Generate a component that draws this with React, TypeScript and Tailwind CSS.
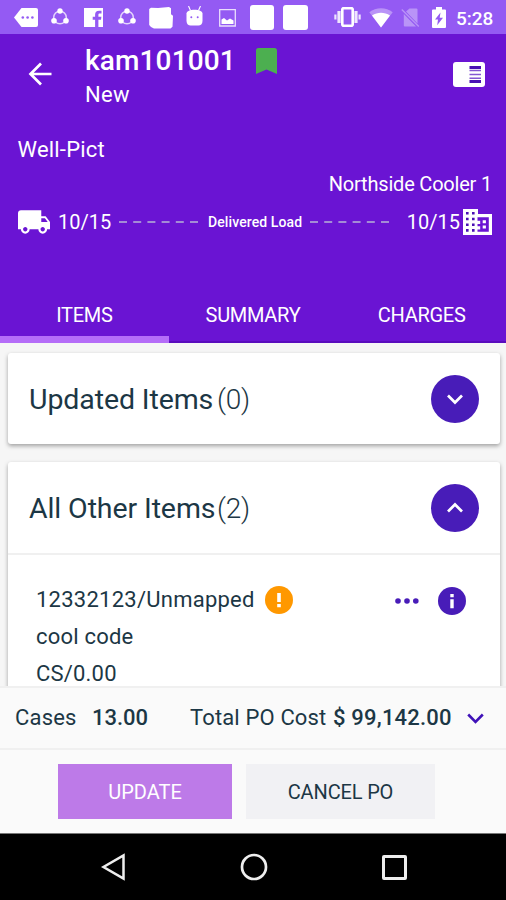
import React, { useState } from 'react';

interface IconProps {
  box: string;
  className: string;
  children: React.ReactNode;
}

const Icon: React.FC<IconProps> = ({ box, className, children }) => (
  <svg viewBox={box} className={`shrink-0 ${className}`} fill="currentColor">
    {children}
  </svg>
);

const ShareIcon = ({ className }: { className: string }) => (
  <Icon box="0 0 18 18" className={className}>
    <circle cx="9" cy="9.5" r="6.3" fill="none" stroke="currentColor" strokeWidth="1.5" opacity="0.75" />
    <circle cx="9" cy="3" r="2.7" />
    <circle cx="3" cy="12.8" r="2.8" />
    <circle cx="15" cy="12.8" r="2.8" />
  </Icon>
);

const StatusBar = () => (
  <div className="flex h-[34px] items-start bg-[#945af3] text-white">
    <Icon box="0 0 24 19" className="ml-[14px] mt-[8px] h-[19px] w-[24px]">
      <path d="M7.500 0H22a2 2 0 0 1 2 2v15a2 2 0 0 1-2 2H7.500L0 9.500z" />
      <g fill="#945af3">
        <circle cx="8.800" cy="9.500" r="1.300" />
        <circle cx="13.600" cy="9.500" r="1.300" />
        <circle cx="18.400" cy="9.500" r="1.300" />
      </g>
    </Icon>
    <ShareIcon className="ml-[13px] mt-[8px] h-[18px] w-[18px]" />
    <Icon box="0 0 19 19" className="ml-[15px] mt-[8px] h-[19px] w-[19px]">
      <path d="M0 0h19v19h-4.600v-7.200h2.600l.4-3h-3V7c0-.9.4-1.400 1.500-1.400h1.600V2.800h-2.400c-2.700 0-4 1.600-4 3.900v2.100H8.700v3h2.400V19H0z" />
    </Icon>
    <ShareIcon className="ml-[15px] mt-[8px] h-[18px] w-[18px]" />
    <Icon box="0 0 24 22" className="ml-[13px] mt-[7px] h-[22px] w-[24px]">
      <path d="M2 .8l7 .2 11-.9 2 1.200v6l2 1.500-.5 11-2 1.700H5l-3-1.500L.2 18V2z" />
    </Icon>
    <Icon box="0 0 17 20" className="ml-[13px] mt-[6px] h-[20px] w-[17px]">
      <path d="M2.500 0l2 4.500M14.500 0l-2 4.500" stroke="currentColor" strokeWidth="1.100" fill="none" />
      <path d="M0.500 7.500C1 5 4 3.800 8.500 3.800S16 5 16.500 7.500V15c0 3-2 4.500-4 4.500h-8c-2 0-4-1.500-4-4.500z" />
      <circle cx="5.300" cy="11.300" r="1" fill="#945af3" />
      <circle cx="11.700" cy="11.300" r="1" fill="#945af3" />
    </Icon>
    <Icon box="0 0 17 18" className="ml-[16px] mt-[9px] h-[18px] w-[17px]">
      <path d="M.7.7h15.600v16.300H.7z" fill="none" stroke="currentColor" strokeWidth="1.300" opacity="0.8" />
      <path d="M2.500 15V10.500l2.500-1.500 3 2.500 3-2 3.500 2V15z" />
    </Icon>
    <div className="ml-[14px] mt-[5px] h-[25px] w-[24px] rounded-[3px] bg-white" />
    <div className="ml-[9px] mt-[5px] h-[25px] w-[25px] rounded-[3px] bg-white" />
    <Icon box="0 0 27 20" className="ml-[26px] mt-[7px] h-[20px] w-[27px]">
      <path d="M9.500 1.200h8a1.200 1.200 0 0 1 1.200 1.200v15.200a1.200 1.200 0 0 1-1.200 1.200h-8a1.200 1.200 0 0 1-1.200-1.200V2.400a1.200 1.200 0 0 1 1.200-1.200z" fill="none" stroke="currentColor" strokeWidth="2.600" />
      <path d="M3.400 4h3.200v12H3.400zM20.400 4h3.200v12h-3.200zM.3 7.500h2.200v5H.3zM24.500 7.500h2.200v5h-2.200z" opacity="0.85" />
    </Icon>
    <Icon box="0 0 24 20" className="ml-[8px] mt-[8px] h-[20px] w-[24px]">
      <path d="M.3 4.200C7-1.200 17-1.200 23.700 4.200L12 19.500z" opacity="0.35" />
      <path d="M3 7.600c5.500-3.700 12.500-3.700 18 0l-9 11.900z" />
    </Icon>
    <Icon box="0 0 19 20" className="ml-[8px] mt-[8px] h-[20px] w-[19px] opacity-35">
      <path d="M5 3.500L8.500.5h7a1 1 0 0 1 1 1V15.500zM2.800 6l12.200 12.500H3.800a1 1 0 0 1-1-1z" />
      <path d="M.8 1.500l17 17" stroke="currentColor" strokeWidth="1.300" />
    </Icon>
    <Icon box="0 0 14 21" className="ml-[12px] mt-[6.500px] h-[21px] w-[14px]">
      <path d="M4 0h6v2.500h3a1 1 0 0 1 1 1V20a1 1 0 0 1-1 1H1a1 1 0 0 1-1-1V3.500a1 1 0 0 1 1-1h3z" />
      <path d="M8.500 5.500L3 12.500h3l-.8 5.800 5.800-7.500H7.700z" fill="#945af3" />
    </Icon>
    <span className="ml-[10px] mt-[7px] text-[19px] font-medium leading-[24px]">5:28</span>
  </div>
);

const Dashes = () => (
  <svg viewBox="0 0 80 2" className="h-[2px] w-[80px] shrink-0 text-[#a48bd6]">
    <path d="M0 1h80" stroke="currentColor" strokeWidth="2" strokeDasharray="8 6.200" />
  </svg>
);

const Header = () => (
  <div className="flex h-[247px] flex-col bg-[#6a14d3] text-white">
    <div className="flex h-[76px]">
      <Icon box="0 0 24 24" className="ml-[28px] mt-[28px] h-[24px] w-[24px]">
        <path d="M23.500 12H3M13 1.500L2.500 12 13 22.500" fill="none" stroke="currentColor" strokeWidth="2.700" />
      </Icon>
      <div className="ml-[33px] flex flex-col">
        <div className="mt-[10px] flex h-[34px] items-center">
          <span className="w-[170.500px] whitespace-nowrap text-[28px] font-medium leading-[34px] tracking-[0.150px]">kam101001</span>
          <Icon box="0 0 21 26" className="h-[26px] w-[21px] text-[#4caf50]">
            <path d="M2.500 0h16A2.500 2.500 0 0 1 21 2.500V26l-10.500-4.500L0 26V2.500A2.500 2.500 0 0 1 2.500 0z" />
          </Icon>
        </div>
        <span className="mt-[4px] text-[22px] leading-[26px] tracking-[0.300px]">New</span>
      </div>
      <Icon box="0 0 32 25" className="ml-auto mr-[21px] mt-[28px] h-[25px] w-[32px]">
        <rect width="32" height="25" rx="3" />
        <path d="M16.500 4H28v3H16.500zM16.500 18H28v3H16.500z" fill="#4a10b4" />
        <path d="M16.500 8.500H28M16.500 12.500H28M16.500 16.300H28" stroke="#8457d2" strokeWidth="1.400" />
      </Icon>
    </div>
    <span className="ml-[17.500px] mt-[27px] text-[22px] leading-[26px] tracking-[0.200px]">Well-Pict</span>
    <span className="mr-[14px] mt-[9px] text-right text-[20px] leading-[24px] tracking-[-0.200px]">Northside Cooler 1</span>
    <div className="mt-[11px] flex h-[30px] items-center">
      <Icon box="1 4 22 16" className="ml-[18px] h-[24px] w-[32px]">
        <path d="M20 8h-3V4H3c-1.100 0-2 .9-2 2v11h2c0 1.660 1.340 3 3 3s3-1.340 3-3h6c0 1.660 1.340 3 3 3s3-1.340 3-3h2v-5l-3-4zM6 18.500c-.83 0-1.500-.67-1.500-1.500s.67-1.500 1.500-1.500 1.500.67 1.500 1.500-.67 1.500-1.500 1.500zm13.500-9l1.960 2.500H17V9.500h2.500zm-1.500 9c-.83 0-1.500-.67-1.500-1.500s.67-1.500 1.500-1.500 1.500.67 1.500 1.500-.67 1.500-1.500 1.500z" />
      </Icon>
      <span className="ml-[8px] w-[61px] text-[20px] leading-[24px]">10/15</span>
      <Dashes />
      <span className="ml-[9px] w-[102px] whitespace-nowrap text-[14px] font-medium leading-[18px] tracking-[0.100px]">Delivered Load</span>
      <Dashes />
      <span className="ml-auto text-[20px] leading-[24px]">10/15</span>
      <Icon box="0 0 29 26" className="ml-[3px] mr-[14px] h-[26px] w-[29px]">
        <path d="M0 0h15v5h14v21H0z" />
        <path d="M3 3h2.600v2.600H3zM9 3h2.600v2.600H9zM3 8.700h2.600v2.600H3zM9 8.700h2.600v2.600H9zM3 14.400h2.600V17H3zM9 14.400h2.600V17H9zM3 20.100h2.600v2.600H3zM9 20.100h2.600v2.600H9z" fill="#4a10b4" />
        <path d="M14.500 8.200h11.300v14.600H14.500v-2.300h2.700v-3.200h-2.700v-2.300h2.700v-3.200h-2.700z" fill="#6a14d3" />
        <path d="M19.700 11.300h3.200v2.900h-3.200zM19.700 16.500h3.200v2.900h-3.200z" />
      </Icon>
    </div>
  </div>
);

const tabs = ['ITEMS', 'SUMMARY', 'CHARGES'];

const Tabs = () => {
  const [active, setActive] = useState<string>('ITEMS');
  return (
    <div className="grid h-[62px] grid-cols-3 bg-[#6a14d3] text-white">
      {tabs.map((tab) => (
        <button
          key={tab}
          onClick={() => setActive(tab)}
          className={
            tab === active
              ? 'flex flex-col items-center border-b-[7px] border-[#b56df8] pt-[22px]'
              : 'flex flex-col items-center border-b-[2px] border-[#5a0cbd] pt-[22px]'
          }
        >
          <span className="text-[20px] leading-[24px] tracking-[-0.300px]">{tab}</span>
        </button>
      ))}
    </div>
  );
};

interface SectionHeadProps {
  title: string;
  count: number;
  open: boolean;
}

const SectionHead: React.FC<SectionHeadProps> = ({ title, count, open }) => (
  <div className="flex h-[91px] items-center pl-[21px] pr-[21px]">
    <span className="mt-[2px] w-[188px] whitespace-nowrap text-[28.500px] leading-[36px] tracking-[-0.100px]">{title}</span>
    <span className="mt-[2px] text-[28px] font-light leading-[36px] tracking-[-0.300px]">({count})</span>
    <button className="ml-auto flex h-[48px] w-[48px] items-center justify-center rounded-full bg-[#481cb8] text-white">
      <Icon box="0 0 18 12" className="h-[12px] w-[18px]">
        <path d={open ? 'M2 9.500l7-7 7 7' : 'M2 2.500l7 7 7-7'} fill="none" stroke="currentColor" strokeWidth="2.700" />
      </Icon>
    </button>
  </div>
);

const ItemRow = () => (
  <div className="flex pl-[28px] pr-[34px] pt-[26px] text-[22px] leading-[37px]">
    <div className="flex flex-col">
      <div className="flex items-center">
        <span className="w-[229px] whitespace-nowrap tracking-[0.250px]">12332123/Unmapped</span>
        <Icon box="0 0 28 28" className="h-[28px] w-[28px] text-[#ff9800]">
          <circle cx="14" cy="14" r="14" />
          <path d="M12.200 7h3.600v9h-3.600zM12.200 18h3.600v3.200h-3.600z" fill="#fff" />
        </Icon>
      </div>
      <span className="tracking-[0.200px]">cool code</span>
      <span className="tracking-[0.200px]">CS/0.00</span>
    </div>
    <div className="ml-auto mt-[6px] flex h-[28px] items-center text-[#481cb8]">
      <Icon box="0 0 24 6" className="mr-[19.500px] h-[6px] w-[24px]">
        <circle cx="3" cy="3" r="2.800" />
        <circle cx="12" cy="3" r="2.800" />
        <circle cx="20.800" cy="3" r="2.800" />
      </Icon>
      <Icon box="0 0 28 28" className="h-[28px] w-[28px]">
        <circle cx="14" cy="14" r="14" />
        <path d="M12.300 7h3.400v3.200h-3.400zM12.300 12.300h3.400v9h-3.400z" fill="#fff" />
      </Icon>
    </div>
  </div>
);

const Totals = () => (
  <div className="flex h-[64px] items-center border-b-2 border-t-2 border-[#f0f0f0] bg-[#fafafa] text-[22px] leading-[28px]">
    <span className="ml-[15px] w-[77px] tracking-[0.200px]">Cases</span>
    <span className="w-[98px] font-medium">13.00</span>
    <span className="w-[143px] whitespace-nowrap tracking-[0.150px]">Total PO Cost</span>
    <span className="w-[134px] whitespace-nowrap font-medium tracking-[0.200px]">$ 99,142.00</span>
    <Icon box="0 0 17 11" className="h-[11px] w-[17px] text-[#3f12b8]">
      <path d="M1.200 1.500l7.300 7.300 7.300-7.300" fill="none" stroke="currentColor" strokeWidth="2.600" />
    </Icon>
  </div>
);

const NavBar = () => (
  <div className="flex h-[67px] items-center border-t border-[#777] bg-black text-[#eee]">
    <Icon box="0 0 26 28" className="ml-[100px] h-[28px] w-[26px]">
      <path d="M23.500 2.500v23L3.500 14z" fill="none" stroke="currentColor" strokeWidth="2.500" />
    </Icon>
    <Icon box="0 0 28 28" className="ml-[113.500px] h-[28px] w-[28px]">
      <circle cx="14" cy="14" r="12" fill="none" stroke="currentColor" strokeWidth="2.700" />
    </Icon>
    <div className="ml-[114px] h-[25px] w-[25px] rounded-[2px] border-[3px] border-[#eee]" />
  </div>
);

const App = () => {
  return (
    <div className="flex h-[900px] w-[506px] flex-col overflow-hidden bg-[#fafafa] font-['Roboto',sans-serif] text-[#1c3745]">
      <StatusBar />
      <Header />
      <Tabs />
      <div className="flex h-[343px] flex-col gap-[18px] overflow-hidden bg-[#f6f6f6] pl-[8px] pr-[6px] pt-[10px]">
        <div className="shrink-0 rounded-[3px] bg-white shadow-[0_2px_4px_rgba(0,0,0,0.35)]">
          <SectionHead title="Updated Items" count={0} open={false} />
        </div>
        <div className="h-[300px] shrink-0 rounded-[3px] bg-white shadow-[0_2px_4px_rgba(0,0,0,0.35)]">
          <div className="border-b-2 border-[#f0f0f0]">
            <SectionHead title="All Other Items" count={2} open={true} />
          </div>
          <ItemRow />
        </div>
      </div>
      <Totals />
      <div className="flex h-[83px] gap-[14px] bg-[#fafafa] pl-[58px] pt-[14px] text-[20px]">
        <button className="h-[55px] w-[174px] bg-[#bd7ae8] pt-[1px] text-white">UPDATE</button>
        <button className="h-[55px] w-[189px] bg-[#f1f1f4] pt-[1px] tracking-[-0.150px]">CANCEL PO</button>
      </div>
      <NavBar />
    </div>
  );
};

export default App;
